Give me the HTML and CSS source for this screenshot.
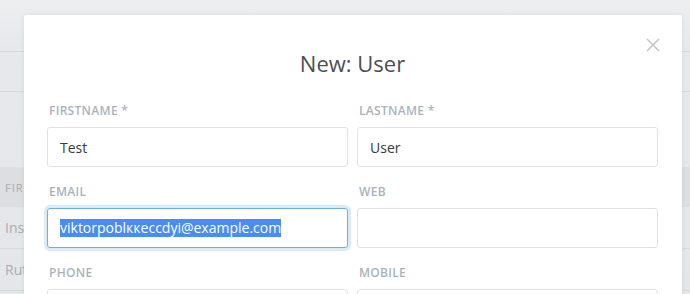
FILE: index.html
```html
<!DOCTYPE html>
<html>
<head>
<meta charset="utf-8">
<link rel="stylesheet" href="styles.css">
</head>
<body>
<div class="app">
  <div class="bar"></div>
  <div class="bar"></div>
  <div class="spacer"></div>
  <div class="table">
    <div class="row head"><span class="cell">FIR</span></div>
    <div class="row"><span class="cell">Ins</span></div>
    <div class="row"><span class="cell">Rut</span></div>
  </div>
</div>
<div class="modal">
  <button class="close" aria-label="Close">
    <svg width="14" height="14" viewBox="0 0 14 14"><path d="M1 1L13 13M13 1L1 13" stroke="#c6c6c6" stroke-width="1.6" fill="none"/></svg>
  </button>
  <h1 class="title">New: User</h1>
  <form class="form">
    <div class="field">
      <label class="label">FIRSTNAME *</label>
      <div class="input">Test</div>
    </div>
    <div class="field">
      <label class="label">LASTNAME *</label>
      <div class="input">User</div>
    </div>
    <div class="field">
      <label class="label">EMAIL</label>
      <div class="input focus"><span class="sel">viktorpoblккeccdyi@example.com</span></div>
    </div>
    <div class="field">
      <label class="label">WEB</label>
      <div class="input"></div>
    </div>
    <div class="field">
      <label class="label">PHONE</label>
      <div class="input"></div>
    </div>
    <div class="field">
      <label class="label">MOBILE</label>
      <div class="input"></div>
    </div>
  </form>
</div>
</body>
</html>
```
FILE: styles.css
```css
* { box-sizing: border-box; }
html, body { margin: 0; height: 100%; overflow: hidden; }
body {
  font-family: "Open Sans", "Noto Sans", sans-serif;
  background: linear-gradient(180deg, #eceef0 0, #e6e8eb 50px, #e4e6e9 100%);
  position: relative;
}
.app {
  display: flex;
  flex-direction: column;
  color: #a9acb0;
}
.bar { height: 40px; border-bottom: 1px solid #d6d8dc; }
.bar:first-child { height: 52px; }
.spacer { height: 75px; }
.row {
  height: 42px;
  border-bottom: 1px solid #d6d8dc;
  padding-left: 5px;
  display: flex;
  align-items: center;
  font-size: 14px;
}
.cell {
  white-space: nowrap;
}
.row.head {
  height: 40px;
  background: #dcdee2;
  font-size: 11px;
  letter-spacing: 1px;
  border-bottom: 0;
}
.modal {
  position: absolute;
  left: 24px;
  top: 15px;
  width: 658px;
  height: 320px;
  background: #fff;
  border-radius: 2px;
  box-shadow: 0 0 5px rgba(0,0,0,0.07);
  padding: 33px 24px 0 23px;
}
.close {
  position: absolute;
  right: 22px;
  top: 23px;
  border: 0;
  background: none;
  padding: 0;
  width: 14px;
  height: 14px;
  display: flex;
}
.title {
  margin: 0;
  text-align: center;
  font-weight: 400;
  font-size: 22px;
  line-height: 30px;
  color: #4c4f53;
}
.form {
  margin-top: 25px;
  display: grid;
  grid-template-columns: 1fr 1fr;
  column-gap: 9px;
}
.field {
  display: flex;
  flex-direction: column;
  margin-bottom: 17px;
}
.label {
  font-size: 12px;
  font-weight: 600;
  line-height: 16px;
  letter-spacing: 0.3px;
  color: #a9b3bc;
  padding-left: 2px;
  margin-bottom: 8px;
}
.input {
  height: 40px;
  border: 1px solid #e2e2e2;
  border-radius: 3px;
  padding: 0 12px;
  display: flex;
  align-items: center;
  font-size: 14px;
  color: #38393b;
}
.input.focus {
  border-color: #6aaee3;
  box-shadow: 0 0 0 3px #daeaf6;
}
.sel {
  background: #4a8cf0;
  color: #fff;
  line-height: 18px;
}
```
